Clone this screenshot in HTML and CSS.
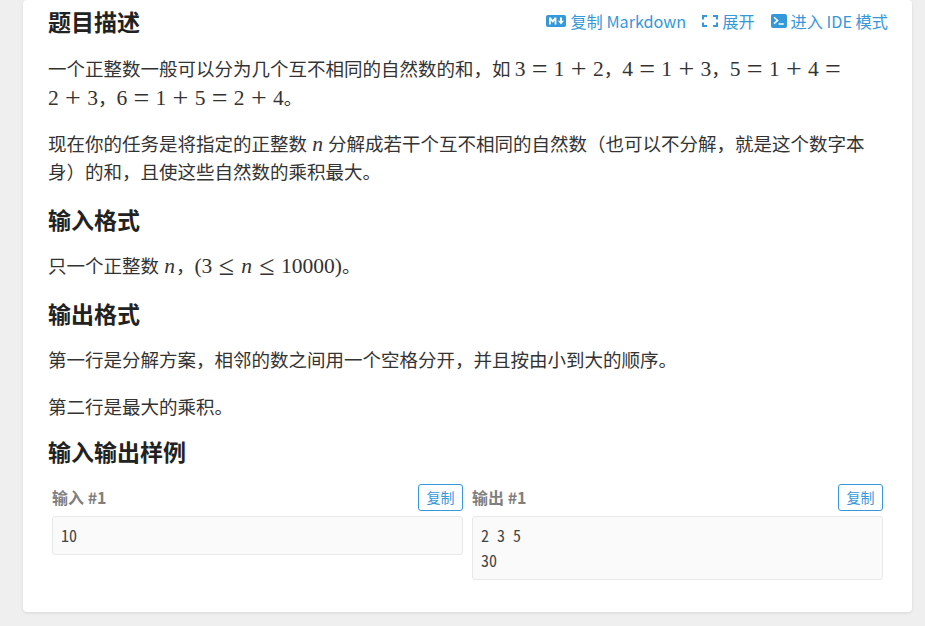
FILE: index.html
```html
<!DOCTYPE html>
<html lang="zh-CN">
<head>
    <meta charset="UTF-8">
    <meta name="viewport" content="width=device-width, initial-scale=1.0">
    <title>题目描述</title>
    <link rel="stylesheet" href="styles.css">
</head>
<body>
    <main class="card">
        <div class="title-row">
            <h2>题目描述</h2>
            <div class="actions">
                <a class="action">
                    <svg class="icon icon-md" viewBox="0 0 20 12"><rect width="20" height="12" rx="2" fill="#3498db"/><path d="M3 9.5v-7h1.9l1.8 2.4 1.8-2.4h1.9v7H8.6V5.4L6.7 7.8 4.8 5.4v4.1zM14 2.5h2v3.2h2l-3 3.8-3-3.8h2z" fill="#fff"/></svg>
                    复制 Markdown
                </a>
                <a class="action">
                    <svg class="icon icon-expand" viewBox="0 0 16 12"><path d="M1 4.5V1h4M11 1h4v3.5M15 7.5V11h-4M5 11H1V7.5" fill="none" stroke="#3498db" stroke-width="2"/></svg>
                    展开
                </a>
                <a class="action">
                    <svg class="icon icon-term" viewBox="0 0 16 14"><rect width="16" height="14" rx="2" fill="#3498db"/><path d="M3 3.2 6.6 6.4 3 9.6" fill="none" stroke="#fff" stroke-width="1.5"/><path d="M7.6 10h5.2" stroke="#fff" stroke-width="1.5"/></svg>
                    进入 IDE 模式
                </a>
            </div>
        </div>
        <p class="lead">一个正整数一般可以分为几个互不相同的自然数的和，如 <span class="math">3<i class="op">=</i>1<i class="op">+</i>2</span>，<span class="math">4<i class="op">=</i>1<i class="op">+</i>3</span>，<span class="math">5<i class="op">=</i>1<i class="op">+</i>4<i class="op">=</i></span><br><span class="math">2<i class="op">+</i>3</span>，<span class="math">6<i class="op">=</i>1<i class="op">+</i>5<i class="op">=</i>2<i class="op">+</i>4</span>。</p>
        <p>现在你的任务是将指定的正整数 <span class="math"><em>n</em></span> 分解成若干个互不相同的自然数（也可以不分解，就是这个数字本身）的和，且使这些自然数的乘积最大。</p>

        <h2>输入格式</h2>
        <p>只一个正整数 <span class="math"><em>n</em></span>，<span class="math">(3<i class="op">≤</i><em>n</em><i class="op">≤</i>10000)</span>。</p>

        <h2>输出格式</h2>
        <p>第一行是分解方案，相邻的数之间用一个空格分开，并且按由小到大的顺序。</p>
        <p>第二行是最大的乘积。</p>

        <h2 class="samples-title">输入输出样例</h2>
        <div class="samples">
            <div class="sample">
                <div class="sample-head">
                    <h5>输入 #1</h5>
                    <button class="copy">复制</button>
                </div>
                <pre>10</pre>
            </div>
            <div class="sample">
                <div class="sample-head">
                    <h5>输出 #1</h5>
                    <button class="copy">复制</button>
                </div>
                <pre>2 3 5
30</pre>
            </div>
        </div>
    </main>
</body>
</html>
```

FILE: styles.css
```css
html, body {
    margin: 0;
    padding: 0;
}
body {
    background: #efefef;
    color: #333;
    font-family: "Noto Sans CJK SC", "Noto Sans", sans-serif;
    font-size: 18.5px;
    text-spacing-trim: space-all; /* keep full width brackets at line end */
}
.card {
    background: #fff;
    border-radius: 4px;
    box-shadow: 0 1px 3px rgba(0, 0, 0, 0.1);
    margin: 0 13px 14px 23px;
    padding: 6px 24px 32px 25px;
}
.title-row {
    display: flex;
    justify-content: space-between;
    align-items: flex-start;
}
h2 {
    color: #222;
    font-size: 23px;
    font-weight: 700;
    line-height: 31px;
    margin: 0 0 16px;
}
.title-row h2 {
    margin-bottom: 17px;
}
.samples-title {
    margin-top: -3px;
    margin-bottom: 17px;
}
p {
    line-height: 28.8px;
    margin: 0 0 18px;
}
.lead {
    margin-bottom: 17px;
}
.actions {
    display: flex;
    gap: 16px;
    font-size: 16.2px;
    line-height: 30px;
}
.action {
    color: #3498db;
    display: flex;
    align-items: center;
    gap: 4px;
}
.icon {
    display: block;
    flex: none;
}
.icon-md {
    width: 20px;
    height: 12px;
}
.icon-expand {
    width: 16px;
    height: 12px;
}
.icon-term {
    width: 16px;
    height: 14px;
}
.math {
    font-family: "Liberation Serif", serif;
    font-size: 21.5px;
    line-height: 0;
}
.math em {
    font-style: italic;
    margin: 0 1px;
}
/* operators are blown up so they get the wide math look */
.op {
    display: inline-block;
    font-size: 28px;
    font-style: normal;
    font-weight: 400;
    line-height: 0;
    margin: 0 6.3px;
    vertical-align: -2px;
}
.samples {
    display: grid;
    grid-template-columns: 1fr 1fr;
    gap: 9px;
    padding: 0 5px 0 4px;
    align-items: start;
}
.sample-head {
    display: flex;
    justify-content: space-between;
    align-items: center;
    margin-bottom: 5px;
}
h5 {
    color: #7f7f7f;
    font-size: 16px;
    font-weight: 700;
    margin: 0;
}
.copy {
    background: #fff;
    border: 1px solid #3498db;
    border-radius: 3px;
    color: #3498db;
    font-family: inherit;
    font-size: 14px;
    height: 27px;
    line-height: 1;
    padding: 0 7.5px;
}
pre {
    background: #fafafa;
    border: 1px solid #e8e8e8;
    border-radius: 3px;
    color: #444;
    font-family: "Noto Sans Mono CJK SC", "Liberation Mono", monospace;
    font-size: 16px;
    line-height: 25px;
    margin: 0;
    padding: 6px 8px;
}
```
